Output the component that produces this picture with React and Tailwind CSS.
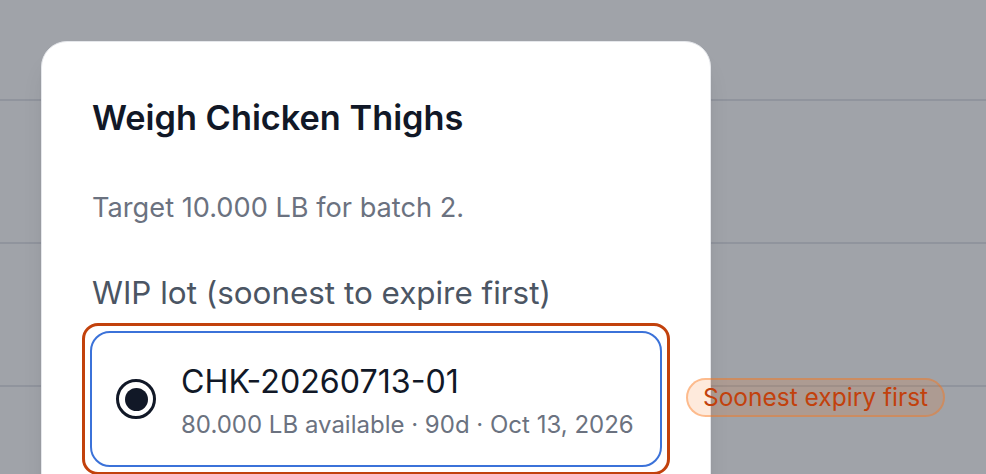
export default function App() {
  const font = { fontFamily: "Inter, 'Noto Sans', sans-serif" };
  return (
    <div className="relative h-[474px] w-[986px] overflow-hidden bg-white" style={font}>
      <div className="flex flex-col">
        <div className="h-[101px] border-b-2 border-[#e5e7eb]" />
        <div className="h-[143px] border-b-2 border-[#e5e7eb]" />
        <div className="h-[143px] border-b-2 border-[#e5e7eb]" />
        <div className="h-[143px]" />
      </div>
      <div className="absolute inset-0 bg-[#111827]/40" />
      <div className="absolute left-[41px] top-[41px] h-[480px] w-[670px] rounded-[26px] border border-[#e5e7eb] bg-white px-[50px] pt-[56px] shadow-xl">
        <h2 className="text-[34.3px] font-semibold leading-[40px] text-[#111827]">Weigh Chicken Thighs</h2>
        <p className="mt-[54px] text-[27.2px] leading-[32px] text-[#6b7280]">Target 10.000 LB for batch 2.</p>
        <p className="mt-[51px] text-[31.4px] leading-[36px] text-[#4b5563]">WIP lot (soonest to expire first)</p>
        <div className="mx-[-10px] mt-[12px] rounded-[16px] border-[3px] border-[#c2410c] p-[5px]">
          <div className="flex items-start rounded-[20px] border-2 border-[#3b72d9] bg-white pl-[24px] pb-[25px] pt-[31px]">
            <div className="mt-[15px] flex h-[40px] w-[40px] shrink-0 items-center justify-center rounded-full border-[3px] border-[#111827]">
              <div className="h-[23px] w-[23px] rounded-full bg-[#111827]" />
            </div>
            <div className="ml-[25px] flex flex-col">
              <span className="text-[32.2px] leading-[36px] text-[#111827]">CHK-20260713-01</span>
              <span className="mt-[10px] text-[24px] leading-[30px] text-[#6b7280]">80.000 LB available · 90d · Oct 13, 2026</span>
            </div>
          </div>
        </div>
      </div>
      <div className="absolute left-[686px] top-[378px] flex h-[39px] w-[259px] items-center justify-center rounded-full border-2 border-[#f97316]/40 bg-[#f97316]/15 text-[24.5px] text-[#c2410c]">
        Soonest expiry first
      </div>
    </div>
  );
}
